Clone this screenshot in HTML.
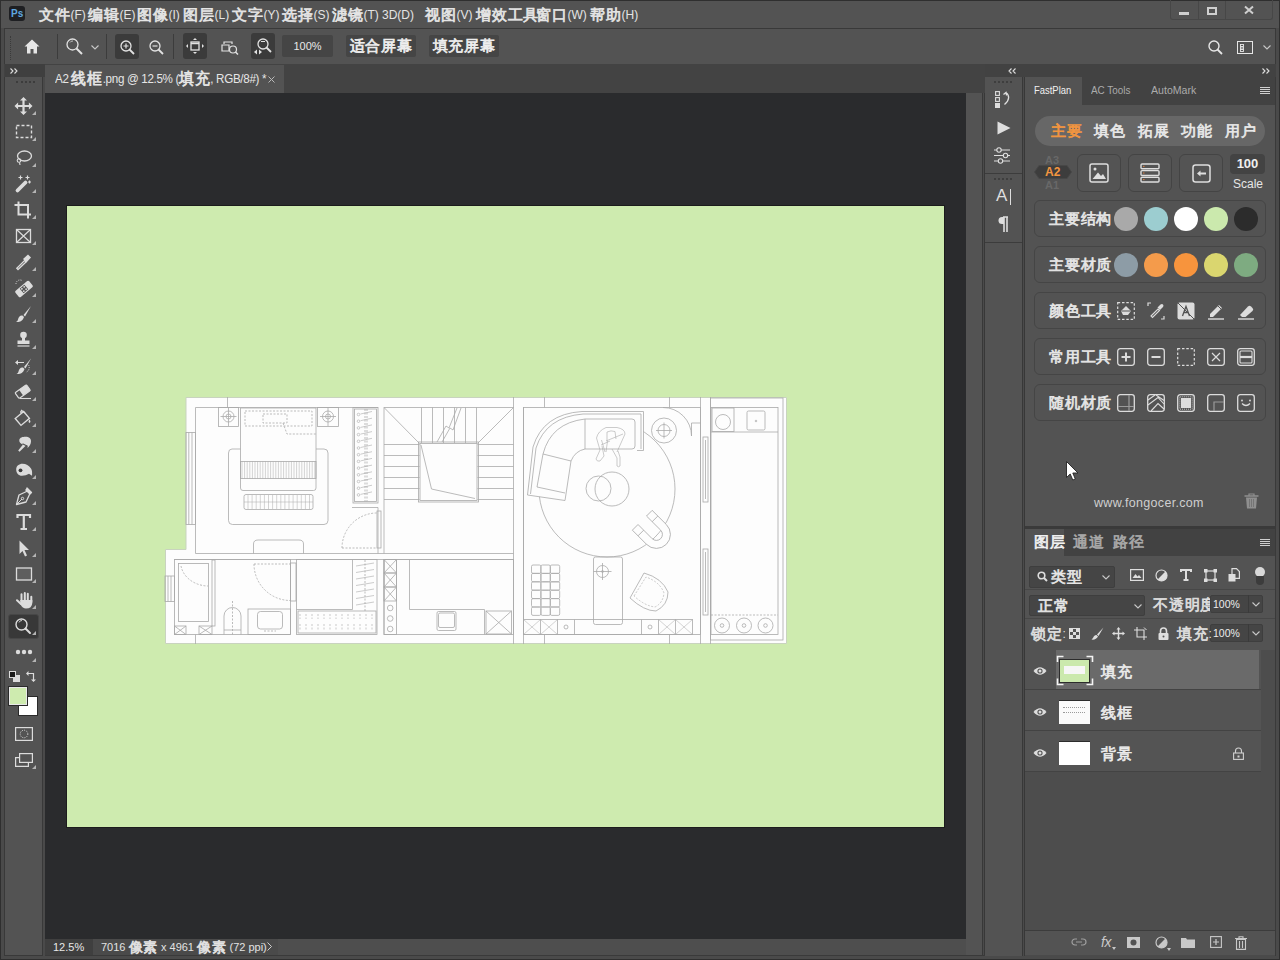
<!DOCTYPE html>
<html><head><meta charset="utf-8"><title>Photoshop</title>
<style>
*{margin:0;padding:0;box-sizing:border-box}
html,body{width:1280px;height:960px;overflow:hidden}
body{position:relative;background:#4a4a4a;font-family:"Liberation Sans",sans-serif;color:#e2e2e2;font-size:12px}
.a{position:absolute}
i{font-style:normal}
.c{font-size:1.25em;letter-spacing:.05em;-webkit-text-stroke:.7px currentColor;line-height:0;vertical-align:-1px}
svg{position:absolute;overflow:visible}
</style></head><body>

<!-- outer frame lines -->
<div class="a" style="left:0;top:0;width:1280px;height:1px;background:#2f2f2f"></div>
<div class="a" style="left:0;top:0;width:1px;height:960px;background:#2f2f2f"></div>
<div class="a" style="left:1279px;top:0;width:1px;height:960px;background:#2f2f2f"></div>
<div class="a" style="left:0;top:959px;width:1280px;height:1px;background:#2f2f2f"></div>

<!-- MENU BAR -->
<div class="a" id="menubar" style="left:1px;top:1px;width:1278px;height:27px;background:#535353"></div>


<!-- menu content -->
<div class="a" style="left:9px;top:6px;width:16px;height:15px;background:#1e1f22;border-radius:3px"></div>
<div class="a" style="left:11px;top:7px;font-size:10px;font-weight:bold;color:#5fa8e0;line-height:13px">Ps</div>
<div class="a" id="menu" style="top:8px;left:0;font-size:12px;line-height:14px;color:#e4e4e4;white-space:nowrap">
<span class="a" style="left:39px"><i class="c">文件</i>(F)</span>
<span class="a" style="left:88px"><i class="c">编辑</i>(E)</span>
<span class="a" style="left:137px"><i class="c">图像</i>(I)</span>
<span class="a" style="left:183px"><i class="c">图层</i>(L)</span>
<span class="a" style="left:232px"><i class="c">文字</i>(Y)</span>
<span class="a" style="left:282px"><i class="c">选择</i>(S)</span>
<span class="a" style="left:332px"><i class="c">滤镜</i>(T)</span>
<span class="a" style="left:382px">3D(D)</span>
<span class="a" style="left:425px"><i class="c">视图</i>(V)</span>
<span class="a" style="left:476px"><i class="c">增效工具</i></span>
<span class="a" style="left:536px"><i class="c">窗口</i>(W)</span>
<span class="a" style="left:590px"><i class="c">帮助</i>(H)</span>
</div>
<!-- window controls -->
<div class="a" style="left:1170px;top:0;width:103px;height:20px;border:1px solid #474747;border-top:none;border-radius:0 0 3px 3px"></div>
<div class="a" style="left:1198px;top:1px;width:1px;height:18px;background:#474747"></div>
<div class="a" style="left:1225px;top:1px;width:1px;height:18px;background:#474747"></div>
<div class="a" style="left:1179px;top:12px;width:10px;height:3px;background:#cfcfcf"></div>
<div class="a" style="left:1207px;top:7px;width:10px;height:8px;border:2px solid #cfcfcf"></div>
<svg class="a" style="left:1244px;top:6px" width="10" height="8" viewBox="0 0 10 8"><path d="M1 0.5L9 7.5M9 0.5L1 7.5" stroke="#cfcfcf" stroke-width="2"/></svg>

<!-- OPTIONS BAR -->
<div class="a" id="optbar" style="left:4px;top:28px;width:1272px;height:37px;background:#535353;border:1px solid #393939;border-right-color:#393939"></div>


<!-- options content -->
<div class="a" style="left:10px;top:36px;width:1px;height:24px;border-left:1px dotted #3a3a3a"></div>
<svg style="left:24px;top:39px" width="16" height="15" viewBox="0 0 16 15"><path d="M8 0.5L0.5 7.5H3V14.5H6.5V10H9.5V14.5H13V7.5H15.5Z" fill="#e6e6e6"/></svg>
<div class="a" style="left:57px;top:34px;width:1px;height:25px;background:#3c3c3c"></div>
<svg style="left:66px;top:38px" width="17" height="17" viewBox="0 0 17 17"><circle cx="6.5" cy="6.5" r="5.5" fill="none" stroke="#e2e2e2" stroke-width="1.3"/><path d="M10.5 10.5L16 16" stroke="#e2e2e2" stroke-width="2"/><path d="M4 4.5A3 3 0 0 1 7 3" stroke="#e2e2e2" stroke-width="0.8" fill="none"/></svg>
<svg style="left:91px;top:45px" width="8" height="5" viewBox="0 0 8 5"><path d="M0.5 0.5L4 4L7.5 0.5" stroke="#c8c8c8" stroke-width="1.1" fill="none"/></svg>
<div class="a" style="left:106px;top:34px;width:1px;height:25px;background:#3c3c3c"></div>
<div class="a" style="left:115px;top:34px;width:24px;height:25px;background:#3b3b3b;border-radius:3px"></div>
<svg style="left:120px;top:40px" width="15" height="15" viewBox="0 0 15 15"><circle cx="6" cy="6" r="5" fill="none" stroke="#e2e2e2" stroke-width="1.3"/><path d="M3.5 6H8.5M6 3.5V8.5" stroke="#e2e2e2" stroke-width="1.2"/><path d="M9.5 9.5L14 14" stroke="#e2e2e2" stroke-width="1.8"/></svg>
<svg style="left:149px;top:40px" width="15" height="15" viewBox="0 0 15 15"><circle cx="6" cy="6" r="5" fill="none" stroke="#e2e2e2" stroke-width="1.3"/><path d="M3.5 6H8.5" stroke="#e2e2e2" stroke-width="1.2"/><path d="M9.5 9.5L14 14" stroke="#e2e2e2" stroke-width="1.8"/></svg>
<div class="a" style="left:173px;top:34px;width:1px;height:25px;background:#3c3c3c"></div>
<div class="a" style="left:183px;top:33px;width:24px;height:26px;background:#3b3b3b;border-radius:3px"></div>
<svg style="left:186px;top:38px" width="18" height="16" viewBox="0 0 18 16"><rect x="5" y="4" width="8" height="8" fill="none" stroke="#e2e2e2" stroke-width="1.3"/><path d="M5 5.5H13" stroke="#e2e2e2" stroke-width="1.5"/><path d="M9 0L7 2H11Z M9 16L7 14H11Z M0 8L2 6V10Z M18 8L16 6V10Z" fill="#e2e2e2"/></svg>
<svg style="left:221px;top:40px" width="18" height="15" viewBox="0 0 18 15"><path d="M3 4V2H11V4M1 5H8V11H1Z" fill="none" stroke="#e2e2e2" stroke-width="1.2"/><circle cx="12" cy="9.5" r="3.5" fill="#535353" stroke="#e2e2e2" stroke-width="1.2"/><path d="M14.5 12L17 14.5" stroke="#e2e2e2" stroke-width="1.5"/></svg>
<div class="a" style="left:251px;top:33px;width:24px;height:26px;background:#3b3b3b;border-radius:3px"></div>
<svg style="left:253px;top:38px" width="20" height="17" viewBox="0 0 20 17"><circle cx="10" cy="6" r="5" fill="none" stroke="#e2e2e2" stroke-width="1.3"/><path d="M8 3.5H12" stroke="#e2e2e2" stroke-width="1"/><path d="M13.5 9.5L18 14" stroke="#e2e2e2" stroke-width="1.8"/><path d="M1 14L4 11.5V16.5Z M9 14L6 11.5V16.5Z" fill="#e2e2e2"/></svg>
<div class="a" style="left:282px;top:35px;width:51px;height:22px;background:#454545;border-radius:2px;font-size:11px;line-height:22px;text-align:center;color:#e8e8e8">100%</div>
<div class="a" style="left:346px;top:35px;width:70px;height:22px;background:#454545;border-radius:2px;font-size:12px;line-height:22px;text-align:center;color:#eeeeee"><i class="c">适合屏幕</i></div>
<div class="a" style="left:429px;top:35px;width:70px;height:22px;background:#454545;border-radius:2px;font-size:12px;line-height:22px;text-align:center;color:#eeeeee"><i class="c">填充屏幕</i></div>
<svg style="left:1208px;top:40px" width="15" height="15" viewBox="0 0 15 15"><circle cx="6" cy="6" r="5" fill="none" stroke="#e6e6e6" stroke-width="1.4"/><path d="M9.5 9.5L14 14" stroke="#e6e6e6" stroke-width="1.8"/></svg>
<div class="a" style="left:1237px;top:41px;width:16px;height:13px;border:1.5px solid #e6e6e6"></div>
<svg style="left:1240px;top:44px" width="4" height="8" viewBox="0 0 4 8"><rect x="0.5" y="0.5" width="3" height="2" fill="none" stroke="#e6e6e6" stroke-width="0.9"/><rect x="0.5" y="3" width="3" height="2" fill="none" stroke="#e6e6e6" stroke-width="0.9"/><rect x="0.5" y="5.5" width="3" height="2" fill="none" stroke="#e6e6e6" stroke-width="0.9"/></svg>
<svg style="left:1263px;top:45px" width="8" height="5" viewBox="0 0 8 5"><path d="M0.5 0.5L4 4L7.5 0.5" stroke="#c8c8c8" stroke-width="1.1" fill="none"/></svg>

<!-- LEFT TOOLBAR -->
<div class="a" style="left:4px;top:64px;width:41px;height:13px;background:#424242"></div>
<div class="a" id="toolbar" style="left:4px;top:77px;width:39px;height:879px;background:#535353;border:1px solid #393939;border-top:none"></div>

<!-- toolbar content -->
<div class="a" style="left:5px;top:64px;width:40px;height:13px;background:#3f3f3f"></div>
<svg style="left:10px;top:68px" width="8" height="6" viewBox="0 0 8 6"><path d="M0.5 0.5L3 3L0.5 5.5M4.5 0.5L7 3L4.5 5.5" stroke="#dcdcdc" stroke-width="1.1" fill="none"/></svg>
<div class="a" style="left:16px;top:81px;width:19px;height:2px;border-top:2px dotted #3c3c3c"></div>
<div class="a" style="left:8px;top:614px;width:31px;height:25px;background:#383838;border-radius:3px;border:1px solid #474747"></div>
<svg style="left:13px;top:96px" width="22" height="20" viewBox="0 0 22 20"><path d="M10.5 1L7 4.6H9.4V8.9H5.1V6.5L1.5 10L5.1 13.5V11.1H9.4V15.4H7L10.5 19L14 15.4H11.6V11.1H15.9V13.5L19.5 10L15.9 6.5V8.9H11.6V4.6H14Z" fill="#dcdcdc"/></svg>
<svg style="left:32px;top:111px" width="4" height="4" viewBox="0 0 4 4"><path d="M4 0V4H0Z" fill="#b4b4b4"/></svg>
<svg style="left:13px;top:122px" width="22" height="20" viewBox="0 0 22 20"><rect x="3.5" y="3.5" width="15" height="12" fill="none" stroke="#dcdcdc" stroke-width="1.4" stroke-dasharray="3 2"/></svg>
<svg style="left:32px;top:137px" width="4" height="4" viewBox="0 0 4 4"><path d="M4 0V4H0Z" fill="#b4b4b4"/></svg>
<svg style="left:13px;top:148px" width="22" height="20" viewBox="0 0 22 20"><ellipse cx="11.5" cy="8" rx="7" ry="5" fill="none" stroke="#dcdcdc" stroke-width="1.3"/><circle cx="6" cy="12.5" r="1.8" fill="none" stroke="#dcdcdc" stroke-width="1.1"/><path d="M6.5 14.3L7 17" stroke="#dcdcdc" stroke-width="1.1"/></svg>
<svg style="left:32px;top:163px" width="4" height="4" viewBox="0 0 4 4"><path d="M4 0V4H0Z" fill="#b4b4b4"/></svg>
<svg style="left:13px;top:174px" width="22" height="20" viewBox="0 0 22 20"><path d="M4.5 16.5L12.5 8.5" stroke="#dcdcdc" stroke-width="3.8" stroke-linecap="round"/><path d="M7.5 1.5V5.5M5.5 3.5H9.5M14.5 1.5V5.5M12.5 3.5H16.5M16.5 6.5V9.5M15 8H18" stroke="#dcdcdc" stroke-width="1.2"/></svg>
<svg style="left:32px;top:189px" width="4" height="4" viewBox="0 0 4 4"><path d="M4 0V4H0Z" fill="#b4b4b4"/></svg>
<svg style="left:13px;top:200px" width="22" height="20" viewBox="0 0 22 20"><path d="M5.5 1.5V14.5H18M1.5 5H15V18.5" fill="none" stroke="#dcdcdc" stroke-width="2"/></svg>
<svg style="left:32px;top:215px" width="4" height="4" viewBox="0 0 4 4"><path d="M4 0V4H0Z" fill="#b4b4b4"/></svg>
<svg style="left:13px;top:226px" width="22" height="20" viewBox="0 0 22 20"><rect x="3.5" y="3.5" width="14" height="13" fill="none" stroke="#dcdcdc" stroke-width="1.3"/><path d="M3.5 3.5L17.5 16.5M17.5 3.5L3.5 16.5" stroke="#dcdcdc" stroke-width="1.2"/></svg>
<svg style="left:32px;top:241px" width="4" height="4" viewBox="0 0 4 4"><path d="M4 0V4H0Z" fill="#b4b4b4"/></svg>
<svg style="left:13px;top:252px" width="22" height="20" viewBox="0 0 22 20"><path d="M5 17.5L3.8 16.3L11.5 8.6L13 10.1Z" fill="none" stroke="#dcdcdc" stroke-width="1.3"/><path d="M10 7L15 2.5L18 5.5L13.5 10.5Z" fill="#dcdcdc"/></svg>
<svg style="left:32px;top:267px" width="4" height="4" viewBox="0 0 4 4"><path d="M4 0V4H0Z" fill="#b4b4b4"/></svg>
<svg style="left:13px;top:278px" width="22" height="20" viewBox="0 0 22 20"><g transform="rotate(-40 11 11)"><rect x="2" y="7" width="18" height="8" rx="1.5" fill="#dcdcdc"/><rect x="8" y="8" width="6" height="6" fill="#535353"/><circle cx="9.5" cy="9.5" r=".9" fill="#dcdcdc"/><circle cx="12.5" cy="9.5" r=".9" fill="#dcdcdc"/><circle cx="9.5" cy="12.5" r=".9" fill="#dcdcdc"/><circle cx="12.5" cy="12.5" r=".9" fill="#dcdcdc"/></g><path d="M3 6A4 4 0 0 1 9 2.5" stroke="#dcdcdc" stroke-width="1" stroke-dasharray="1 1.2" fill="none"/></svg>
<svg style="left:32px;top:293px" width="4" height="4" viewBox="0 0 4 4"><path d="M4 0V4H0Z" fill="#b4b4b4"/></svg>
<svg style="left:13px;top:304px" width="22" height="20" viewBox="0 0 22 20"><path d="M18 2L10.5 11L12 12.5Z" fill="#dcdcdc"/><path d="M9.5 11.5C7 11 5.5 13 5 15.5C4.5 17 4 17.5 3 18C6 18.5 9.5 17.5 11 13Z" fill="#dcdcdc"/></svg>
<svg style="left:32px;top:319px" width="4" height="4" viewBox="0 0 4 4"><path d="M4 0V4H0Z" fill="#b4b4b4"/></svg>
<svg style="left:13px;top:330px" width="22" height="20" viewBox="0 0 22 20"><circle cx="10.5" cy="5" r="3.3" fill="#dcdcdc"/><path d="M9 7.5H12V10.5H16.5V14H4.5V10.5H9Z" fill="#dcdcdc"/><path d="M4.5 16H16.5" stroke="#dcdcdc" stroke-width="1.2"/></svg>
<svg style="left:32px;top:345px" width="4" height="4" viewBox="0 0 4 4"><path d="M4 0V4H0Z" fill="#b4b4b4"/></svg>
<svg style="left:13px;top:356px" width="22" height="20" viewBox="0 0 22 20"><path d="M18 2.5L11 11L12.5 12.5Z" fill="#dcdcdc"/><path d="M10 11.5C7.5 11 6 13 5.5 15.5C5 17 4.5 17.5 3.5 18C6.5 18.5 10 17.5 11.5 13Z" fill="#dcdcdc"/><path d="M2 6.5L5 4V9Z" fill="#dcdcdc"/><path d="M5 6.5H11" stroke="#dcdcdc" stroke-width="1"/><path d="M15.5 9A5 5 0 0 1 13.5 16" stroke="#dcdcdc" stroke-width="1" stroke-dasharray="1 1.2" fill="none"/></svg>
<svg style="left:32px;top:371px" width="4" height="4" viewBox="0 0 4 4"><path d="M4 0V4H0Z" fill="#b4b4b4"/></svg>
<svg style="left:13px;top:382px" width="22" height="20" viewBox="0 0 22 20"><g transform="rotate(-35 10 10)"><rect x="3" y="6" width="14" height="7" rx="1" fill="none" stroke="#dcdcdc" stroke-width="1.2"/><rect x="8" y="6" width="9" height="7" fill="#dcdcdc"/></g><path d="M7 16.5H18" stroke="#dcdcdc" stroke-width="1.1"/></svg>
<svg style="left:32px;top:397px" width="4" height="4" viewBox="0 0 4 4"><path d="M4 0V4H0Z" fill="#b4b4b4"/></svg>
<svg style="left:13px;top:408px" width="22" height="20" viewBox="0 0 22 20"><g transform="rotate(-40 9 10)"><rect x="3.5" y="6" width="11" height="9" fill="none" stroke="#dcdcdc" stroke-width="1.4"/></g><path d="M8 2L12 5" stroke="#dcdcdc" stroke-width="1.2"/><circle cx="8" cy="4" r="1" fill="#dcdcdc"/><path d="M16.5 11.5C15.5 13 15 14 16.5 15C18 14 17.5 13 16.5 11.5Z" fill="#dcdcdc"/></svg>
<svg style="left:32px;top:423px" width="4" height="4" viewBox="0 0 4 4"><path d="M4 0V4H0Z" fill="#b4b4b4"/></svg>
<svg style="left:13px;top:434px" width="22" height="20" viewBox="0 0 22 20"><path d="M6.5 17.8L5.2 16.6L10 10.5C7.5 10 6 8 6.3 6C6.8 3.5 9.5 2.8 12.5 2.8C16 2.8 18.3 4.5 18 7.8C17.7 10.5 16.5 12.5 14.5 14L14.8 11.8L13.2 11.2Z" fill="#dcdcdc"/><path d="M9.5 9.8L14 12" stroke="#535353" stroke-width="1.1"/></svg>
<svg style="left:32px;top:449px" width="4" height="4" viewBox="0 0 4 4"><path d="M4 0V4H0Z" fill="#b4b4b4"/></svg>
<svg style="left:13px;top:460px" width="22" height="20" viewBox="0 0 22 20"><path d="M3.2 9.5C3.2 6 6 3.8 9.5 3.8C13 3.8 16 5.5 18 8.5C19.2 10.5 19.3 13 19 15.8L16 13.8C14 15 11.5 15.8 9 15.8C5.5 15.8 3.2 13 3.2 9.5Z" fill="#dcdcdc"/><circle cx="7.5" cy="10.3" r="1.9" fill="#3a3a3a"/></svg>
<svg style="left:32px;top:475px" width="4" height="4" viewBox="0 0 4 4"><path d="M4 0V4H0Z" fill="#b4b4b4"/></svg>
<svg style="left:13px;top:486px" width="22" height="20" viewBox="0 0 22 20"><path d="M14 2L18.5 6.5L16.5 8.5L13 16L3.5 18.5L6 9L13.5 5.5Z" fill="none" stroke="#dcdcdc" stroke-width="1.3" stroke-linejoin="round"/><path d="M14 2L18.5 6.5L16.5 8.5L12 4Z" fill="#dcdcdc"/><path d="M3.5 18.5L9 13" stroke="#dcdcdc" stroke-width="1"/><circle cx="9.5" cy="12.5" r="1.2" fill="none" stroke="#dcdcdc" stroke-width="1"/></svg>
<svg style="left:32px;top:501px" width="4" height="4" viewBox="0 0 4 4"><path d="M4 0V4H0Z" fill="#b4b4b4"/></svg>
<svg style="left:13px;top:512px" width="22" height="20" viewBox="0 0 22 20"><path d="M4.5 6V3H17V6M10.8 3V17M7.5 17H14" fill="none" stroke="#dcdcdc" stroke-width="2.2"/></svg>
<svg style="left:32px;top:527px" width="4" height="4" viewBox="0 0 4 4"><path d="M4 0V4H0Z" fill="#b4b4b4"/></svg>
<svg style="left:13px;top:538px" width="22" height="20" viewBox="0 0 22 20"><path d="M6.5 2.5V16L9.5 13L12 18.5L14 17.5L11.5 12H16Z" fill="#dcdcdc"/></svg>
<svg style="left:32px;top:553px" width="4" height="4" viewBox="0 0 4 4"><path d="M4 0V4H0Z" fill="#b4b4b4"/></svg>
<svg style="left:13px;top:564px" width="22" height="20" viewBox="0 0 22 20"><rect x="3.5" y="4" width="15" height="12" fill="#5e5e5e" stroke="#dcdcdc" stroke-width="1.3"/></svg>
<svg style="left:32px;top:579px" width="4" height="4" viewBox="0 0 4 4"><path d="M4 0V4H0Z" fill="#b4b4b4"/></svg>
<svg style="left:13px;top:590px" width="22" height="20" viewBox="0 0 22 20"><path d="M8.5 4.2V11M11.8 3V11M14.8 3.8V11M18.3 6.8V12M4 10.2L8 14" stroke="#dcdcdc" stroke-width="2" stroke-linecap="round" fill="none"/><path d="M7.2 10H19.3V13Q19 18.5 13 18.5Q9.5 18.5 7.5 14.5Z" fill="#dcdcdc"/></svg>
<svg style="left:32px;top:605px" width="4" height="4" viewBox="0 0 4 4"><path d="M4 0V4H0Z" fill="#b4b4b4"/></svg>
<svg style="left:13px;top:616px" width="22" height="20" viewBox="0 0 22 20"><circle cx="8.5" cy="8.5" r="5.5" fill="none" stroke="#dcdcdc" stroke-width="1.4"/><path d="M12.5 12.5L17 17" stroke="#dcdcdc" stroke-width="2" stroke-linecap="round"/><path d="M6 6.5A3 3 0 0 1 9 4.5" stroke="#dcdcdc" stroke-width="0.9" fill="none"/></svg>
<svg style="left:32px;top:631px" width="4" height="4" viewBox="0 0 4 4"><path d="M4 0V4H0Z" fill="#b4b4b4"/></svg>
<svg style="left:15px;top:648px" width="18" height="8" viewBox="0 0 18 8"><circle cx="3" cy="4" r="2.2" fill="#dcdcdc"/><circle cx="9" cy="4" r="2.2" fill="#dcdcdc"/><circle cx="15" cy="4" r="2.2" fill="#dcdcdc"/></svg>
<svg style="left:32px;top:658px" width="4" height="4" viewBox="0 0 4 4"><path d="M4 0V4H0Z" fill="#b4b4b4"/></svg>
<div class="a" style="left:13px;top:675px;width:7px;height:7px;background:#dcdcdc"></div>
<div class="a" style="left:9px;top:671px;width:7px;height:7px;background:#1a1a1a;border:1px solid #dcdcdc"></div>
<svg style="left:26px;top:670px" width="11" height="12" viewBox="0 0 11 12"><path d="M1 3.5H7.5V10" fill="none" stroke="#dcdcdc" stroke-width="1.2"/><path d="M0 3.5L2.5 1V6Z M7.5 12L5 9.5H10Z" fill="#dcdcdc"/></svg>
<div class="a" style="left:18px;top:696px;width:20px;height:20px;background:#ffffff;border:1px solid #2a2a2a"></div>
<div class="a" style="left:8px;top:686px;width:20px;height:20px;background:#ceebaf;border:1px solid #2a2a2a;box-shadow:0 0 0 1px #e8e8e8 inset"></div>
<svg style="left:15px;top:727px" width="18" height="14" viewBox="0 0 18 14"><rect x="0.6" y="0.6" width="16.8" height="12.8" fill="none" stroke="#dcdcdc" stroke-width="1.2"/><circle cx="9" cy="7" r="3.8" fill="none" stroke="#dcdcdc" stroke-width="1" stroke-dasharray="1 1.2"/></svg>
<svg style="left:15px;top:753px" width="18" height="14" viewBox="0 0 18 14"><rect x="4.6" y="0.6" width="12.8" height="8.8" fill="none" stroke="#dcdcdc" stroke-width="1.2"/><path d="M4.6 4.6H0.6V13.4H13.4V9.4" fill="none" stroke="#dcdcdc" stroke-width="1.2"/></svg>
<svg style="left:32px;top:765px" width="4" height="4" viewBox="0 0 4 4"><path d="M4 0V4H0Z" fill="#b4b4b4"/></svg>

<!-- TAB BAR -->
<div class="a" style="left:45px;top:64px;width:940px;height:29px;background:#434343"></div>
<div class="a" style="left:45px;top:65px;width:239px;height:28px;background:#535353"></div>

<div class="a" style="left:55px;top:72px;font-size:12.5px;letter-spacing:-0.35px;line-height:14px;color:#e6e6e6;white-space:nowrap;transform:scaleX(.93);transform-origin:0 0">A2 <i class="c">线框</i>.png @ 12.5% (<i class="c">填充</i>, RGB/8#) *</div>
<svg style="left:268px;top:76px" width="7" height="7" viewBox="0 0 7 7"><path d="M0.5 0.5L6.5 6.5M6.5 0.5L0.5 6.5" stroke="#b8b8b8" stroke-width="1"/></svg>

<!-- CANVAS PASTEBOARD -->
<div class="a" id="paste" style="left:45px;top:93px;width:921px;height:846px;background:#2a2b2d"></div>
<!-- scroll strip -->
<div class="a" style="left:966px;top:93px;width:16px;height:862px;background:#535353"></div>
<div class="a" style="left:982px;top:93px;width:3px;height:863px;background:#4b4b4b;border-left:1px solid #383838;border-right:1px solid #383838"></div>

<!-- green canvas -->
<div class="a" style="left:66px;top:205px;width:879px;height:623px;background:#1c1c1c"></div>
<div class="a" id="green" style="left:67px;top:206px;width:877px;height:621px;background:#ceebaf"></div>

<!-- floor plan -->
<svg style="left:165px;top:397px" width="623" height="248" viewBox="165 397 623 248"><path d="M186 397.5H786.5V643.5H165.5V549.5H186Z" fill="#fdfdfd" stroke="#c9d3bf" stroke-width="1"/><g fill="none" stroke="#a9a9a9" stroke-width="0.8"><path d="M227.5 397L227.5 407.5"/><path d="M378 407.5H195.5V553.5H513.5"/><path d="M174.5 559.5L513.5 559.5"/><rect x="186" y="432.5" width="9.5" height="92.0"/><path d="M188.8 432.5L188.8 524.5"/><path d="M192 432.5L192 524.5"/><rect x="218.5" y="407.5" width="20.0" height="19.0"/><circle cx="228.5" cy="416.5" r="5.5"/><circle cx="228.5" cy="416.5" r="2.5"/><path d="M220.5 416.5L236.5 416.5"/><path d="M228.5 408L228.51 426"/><rect x="317.5" y="407.5" width="21.0" height="19.0"/><circle cx="328" cy="416.5" r="5.5"/><circle cx="328" cy="416.5" r="2.5"/><path d="M320 416.5L336 416.5"/><path d="M328 408L328.01 426"/><path d="M240.5 408H316V488Q316 490.5 313.5 490.5H243Q240.5 490.5 240.5 488Z"/><rect x="240.5" y="461.5" width="75.5" height="17.0"/><path d="M242.0 461.5V478.5M244.6 461.5V478.5M247.2 461.5V478.5M249.8 461.5V478.5M252.4 461.5V478.5M255.0 461.5V478.5M257.6 461.5V478.5M260.2 461.5V478.5M262.8 461.5V478.5M265.4 461.5V478.5M268.0 461.5V478.5M270.6 461.5V478.5M273.2 461.5V478.5M275.8 461.5V478.5M278.4 461.5V478.5M281.0 461.5V478.5M283.6 461.5V478.5M286.2 461.5V478.5M288.8 461.5V478.5M291.4 461.5V478.5M294.0 461.5V478.5M296.6 461.5V478.5M299.2 461.5V478.5M301.8 461.5V478.5M304.4 461.5V478.5M307.0 461.5V478.5M309.6 461.5V478.5M312.2 461.5V478.5M314.8 461.5V478.5" stroke-width="0.5"/><rect x="245" y="411" width="67" height="15" stroke-dasharray="2 1.5"/><rect x="263" y="414" width="24" height="9" stroke-dasharray="2 1.5"/><path d="M283 423L287 434H316" stroke-dasharray="2 1.5"/><path d="M240.5 449H232Q228.5 449 228.5 453V520.5Q228.5 524.5 232.5 524.5H324Q328 524.5 328 520.5V453Q328 449 324 449H316"/><rect x="244" y="494.5" width="69" height="15.0" rx="2"/><path d="M244 502L313 502" stroke-width="0.5"/><path d="M248.0 495V509M252.1 495V509M256.2 495V509M260.3 495V509M264.4 495V509M268.5 495V509M272.6 495V509M276.7 495V509M280.8 495V509M284.9 495V509M289.0 495V509M293.1 495V509M297.2 495V509M301.3 495V509M305.4 495V509M309.5 495V509" stroke-width="0.5"/><path d="M253.5 553.5V544Q253.5 540 258 540H299Q303.5 540 303.5 544V553.5"/><rect x="353" y="407.5" width="25" height="95.5"/><rect x="354.5" y="409" width="22.0" height="92.5"/><path d="M365 409L365 501.5" stroke-dasharray="2 1.5"/><path d="M367 409L367 501.5" stroke-dasharray="2 1.5"/><path d="M360.5 414.0L372 411.5M360.5 420.7L372 418.2M360.5 427.4L372 424.9M360.5 434.1L372 431.6M360.5 440.8L372 438.3M360.5 447.5L372 445.0M360.5 454.2L372 451.7M360.5 460.9L372 458.4M360.5 467.6L372 465.1M360.5 474.3L372 471.8M360.5 481.0L372 478.5M360.5 487.7L372 485.2M360.5 494.4L372 491.9" stroke-width="0.6"/><circle cx="358.5" cy="414.5" r="1.3" stroke-width="0.6"/><circle cx="358.5" cy="421.2" r="1.3" stroke-width="0.6"/><circle cx="358.5" cy="427.9" r="1.3" stroke-width="0.6"/><circle cx="358.5" cy="434.6" r="1.3" stroke-width="0.6"/><circle cx="358.5" cy="441.3" r="1.3" stroke-width="0.6"/><circle cx="358.5" cy="448.0" r="1.3" stroke-width="0.6"/><circle cx="358.5" cy="454.7" r="1.3" stroke-width="0.6"/><circle cx="358.5" cy="461.4" r="1.3" stroke-width="0.6"/><circle cx="358.5" cy="468.1" r="1.3" stroke-width="0.6"/><circle cx="358.5" cy="474.8" r="1.3" stroke-width="0.6"/><circle cx="358.5" cy="481.5" r="1.3" stroke-width="0.6"/><circle cx="358.5" cy="488.2" r="1.3" stroke-width="0.6"/><circle cx="358.5" cy="494.9" r="1.3" stroke-width="0.6"/><path d="M352 507.5H378V553.5"/><path d="M342 548A35 35 0 0 1 377 513" stroke-dasharray="2 1.5"/><path d="M342 548L377 548" stroke-dasharray="2 1.5"/><rect x="377" y="511" width="4" height="37"/><path d="M384 407.5L384 553.5"/><path d="M384 407.5L513.5 407.5"/><path d="M384 407.5L419.5 443.5"/><path d="M513.5 407.5L477.5 443.5"/><rect x="418.5" y="442" width="60.0" height="60"/><rect x="420" y="443.5" width="57" height="57.0"/><path d="M421.5 407.5L421.5 443"/><path d="M432.5 407.5L432.5 443"/><path d="M443.5 407.5L443.5 443"/><path d="M454.5 407.5L454.5 443"/><path d="M465.5 407.5L465.5 443"/><path d="M476.5 407.5L476.5 443"/><path d="M384 444.5L419.5 444.5"/><path d="M477.5 444.5L513.5 444.5"/><path d="M384 455.5L419.5 455.5"/><path d="M477.5 455.5L513.5 455.5"/><path d="M384 466.5L419.5 466.5"/><path d="M477.5 466.5L513.5 466.5"/><path d="M384 477.5L419.5 477.5"/><path d="M477.5 477.5L513.5 477.5"/><path d="M384 488.5L419.5 488.5"/><path d="M477.5 488.5L513.5 488.5"/><path d="M384 499.5L419.5 499.5"/><path d="M477.5 499.5L513.5 499.5"/><path d="M421 445L431.5 489L475 498.5"/><path d="M437 442L446 426L449 428L457 408M442 442L450 428L453 430L461 408"/><path d="M513.5 397L513.5 644"/><path d="M523.5 407.5L523.5 644"/><rect x="174.5" y="559.5" width="116.0" height="75.0"/><rect x="178.5" y="563.5" width="30.0" height="58.0"/><rect x="212" y="560" width="3" height="66" rx=" fill="#d2d2d2""/><rect x="174.5" y="626" width="11.5" height="8.5"/><path d="M174.5 626L186 634.5"/><path d="M186 626L174.5 634.5"/><rect x="199" y="626" width="13" height="8.5"/><path d="M199 626L212 634.5"/><path d="M212 626L199 634.5"/><path d="M181 566A28 24 0 0 0 208 586" stroke-dasharray="2 1.5"/><rect x="165" y="576" width="9.5" height="25.5"/><path d="M168 576L168 601.5"/><path d="M171 576L171 601.5"/><path d="M224 634.5V616A8.5 8.5 0 0 1 241 616V634.5"/><path d="M232.5 601L232.5 634.5" stroke-dasharray="2 1.5"/><path d="M224 630L241 630"/><rect x="248" y="609" width="42.5" height="25.5"/><rect x="257.5" y="611.5" width="25.0" height="17.5" rx="3"/><path d="M264 631L276 631" stroke-dasharray="2 1.5"/><path d="M254 564A36.5 36.5 0 0 0 290.5 600.5" stroke-dasharray="2 1.5"/><path d="M254 564L290.5 564" stroke-dasharray="2 1.5"/><rect x="290.5" y="563" width="5.5" height="38"/><rect x="296.5" y="559.5" width="80.5" height="75.0"/><path d="M296.5 609.5H352.5V559.5"/><rect x="298" y="611" width="78" height="22"/><path d="M300 614V619M300 624V630M306 614V619M306 624V630M312 614V619M312 624V630M318 614V619M318 624V630M324 614V619M324 624V630M330 614V619M330 624V630M336 614V619M336 624V630M342 614V619M342 624V630M348 614V619M348 624V630M354 614V619M354 624V630M360 614V619M360 624V630M366 614V619M366 624V630M372 614V619M372 624V630" stroke-width="0.6" stroke-dasharray="2 1.5"/><path d="M356 566.0L374 563.0M356 572.5L374 569.5M356 579.0L374 576.0M356 585.5L374 582.5M356 592.0L374 589.0M356 598.5L374 595.5M356 605.0L374 602.0" stroke-width="0.6"/><path d="M365 560L365 611" stroke-dasharray="2 1.5"/><path d="M195.5 634.5L195.5 644"/><rect x="384" y="559.5" width="129.5" height="75.0"/><rect x="384" y="559.5" width="12.5" height="75.0"/><rect x="384" y="559.5" width="12.5" height="13.5"/><path d="M384 559.5L396.5 573"/><path d="M396.5 559.5L384 573"/><rect x="384" y="573" width="12.5" height="14"/><path d="M384 573L396.5 587"/><path d="M396.5 573L384 587"/><rect x="384" y="587" width="12.5" height="14"/><path d="M384 587L396.5 601"/><path d="M396.5 587L384 601"/><circle cx="390.2" cy="608" r="2.8"/><circle cx="390.2" cy="618.5" r="2.8"/><circle cx="390.2" cy="629" r="2.8"/><path d="M409.5 559.5V609.5H484.5V634.5"/><rect x="437" y="611.5" width="19" height="19.0" rx="1.5"/><rect x="438.5" y="613" width="16.0" height="14.5" rx="1.5"/><rect x="486" y="611" width="25.5" height="23"/><path d="M486 611L511.5 634"/><path d="M511.5 611L486 634"/><rect x="523.5" y="407.5" width="177.0" height="227.0"/><path d="M544.5 397L544.5 407.5"/><path d="M544.5 634.5L544.5 644"/><path d="M669.5 397L669.5 407.5"/><path d="M669.5 634.5L669.5 644"/><circle cx="607" cy="489" r="68"/><path d="M527.5 495L533 447Q543 414 582 411.5H643.5V450.5H585Q575 451 571 461L565 500.5Z" fill="#fdfdfd" stroke="none"/><path d="M527.5 495L533 447Q543 414 582 411.5H643.5V450.5H637"/><path d="M530.5 494L536 448Q546 417 583 414H641V449"/><path d="M585 419H632Q635 419 635 422V446Q635 449 632 449H585Q575 451 571 461L565 500.5L527.5 495"/><path d="M585 419Q551 423 543 454L537 487L565 493"/><path d="M543 454L571 461"/><path d="M585 419V449"/><path d="M596.5 438Q598 431 606 427.5H617Q625 429 625 434L617 452M596.5 438L600 450L596 459Q597 462 600 461L604 456L602 446M601.5 440L605 452M607.5 441L606 452M607 441V432Q611 430 615 431.5L616 439M606 441L623 434M612 449L617 458V466Q618.5 467.5 620 466V457L618 451M601 445L610 441" stroke-width="0.6"/><circle cx="598.5" cy="488.5" r="12.5"/><circle cx="612" cy="489" r="17"/><circle cx="664" cy="430.5" r="12.5"/><circle cx="664" cy="430.5" r="6"/><path d="M656 430.5L672 430.5"/><path d="M664 422.5L664.01 438.5"/><path d="M663 407.5A28.5 28.5 0 0 1 691.5 436V423H700.5"/><g transform="translate(655 533) rotate(-45)"><path d="M-14 -18V2A14 14 0 0 0 14 2V-18H6V2A6 6 0 0 1 -6 2V-18Z" fill="#fdfdfd"/><path d="M-14 -10H-6M6 -10H14" /></g><rect x="531.5" y="565.0" width="9.4" height="8.4" rx="1.5"/><rect x="531.5" y="573.4" width="9.4" height="8.4" rx="1.5"/><rect x="531.5" y="581.8" width="9.4" height="8.4" rx="1.5"/><rect x="531.5" y="590.2" width="9.4" height="8.4" rx="1.5"/><rect x="531.5" y="598.6" width="9.4" height="8.4" rx="1.5"/><rect x="531.5" y="607.0" width="9.4" height="8.4" rx="1.5"/><rect x="540.9" y="565.0" width="9.4" height="8.4" rx="1.5"/><rect x="540.9" y="573.4" width="9.4" height="8.4" rx="1.5"/><rect x="540.9" y="581.8" width="9.4" height="8.4" rx="1.5"/><rect x="540.9" y="590.2" width="9.4" height="8.4" rx="1.5"/><rect x="540.9" y="598.6" width="9.4" height="8.4" rx="1.5"/><rect x="540.9" y="607.0" width="9.4" height="8.4" rx="1.5"/><rect x="550.3" y="565.0" width="9.4" height="8.4" rx="1.5"/><rect x="550.3" y="573.4" width="9.4" height="8.4" rx="1.5"/><rect x="550.3" y="581.8" width="9.4" height="8.4" rx="1.5"/><rect x="550.3" y="590.2" width="9.4" height="8.4" rx="1.5"/><rect x="550.3" y="598.6" width="9.4" height="8.4" rx="1.5"/><rect x="550.3" y="607.0" width="9.4" height="8.4" rx="1.5"/><rect x="593.5" y="557" width="29.0" height="67.5" rx="2"/><circle cx="602.5" cy="571.5" r="6"/><circle cx="602.5" cy="571.5" r="1"/><path d="M593.5 571.5L611.5 571.5"/><path d="M602.5 563L602.51 580"/><path d="M630 598L644 573Q662 578 668 592Q668 605 656 611Q644 611 630 598Z"/><path d="M634 596L646 577Q660 582 664 593Q663 603 655 607Q645 606 634 596Z" stroke-width="0.6" stroke-dasharray="2 1.5"/><rect x="523.5" y="619.5" width="169.0" height="15.0"/><path d="M540.5 619.5L540.5 634.5"/><path d="M557.5 619.5L557.5 634.5"/><path d="M574.5 619.5L574.5 634.5"/><path d="M641.5 619.5L641.5 634.5"/><path d="M658.5 619.5L658.5 634.5"/><path d="M675.5 619.5L675.5 634.5"/><path d="M523.5 619.5L540.5 634.5" stroke-width="0.5"/><path d="M540.5 619.5L523.5 634.5" stroke-width="0.5"/><path d="M540.5 619.5L557.5 634.5" stroke-width="0.5"/><path d="M557.5 619.5L540.5 634.5" stroke-width="0.5"/><path d="M658.5 619.5L675.5 634.5" stroke-width="0.5"/><path d="M675.5 619.5L658.5 634.5" stroke-width="0.5"/><path d="M675.5 619.5L692.5 634.5" stroke-width="0.5"/><path d="M692.5 619.5L675.5 634.5" stroke-width="0.5"/><circle cx="566" cy="627" r="2"/><circle cx="650" cy="627" r="2"/><path d="M700.5 397L700.5 644"/><path d="M710.5 397L710.5 644"/><rect x="703" y="437" width="5" height="65"/><path d="M705.5 440L705.5 499"/><rect x="703" y="549" width="5" height="66"/><path d="M705.5 552L705.5 612"/><rect x="710.5" y="398" width="72.5" height="242"/><rect x="711" y="407.5" width="67" height="227.0"/><rect x="712" y="408" width="22" height="23.5"/><circle cx="723" cy="422" r="7.5"/><rect x="747" y="411" width="18" height="19" rx="1.5"/><circle cx="756" cy="421" r="0.8"/><path d="M711 432L778 432"/><path d="M711 615L778 615" stroke-dasharray="2 1.5"/><circle cx="722" cy="625.5" r="7.5"/><circle cx="722" cy="625.5" r="1.8"/><circle cx="744" cy="625.5" r="7.5"/><circle cx="744" cy="625.5" r="1.8"/><circle cx="765.5" cy="625.5" r="7.5"/><circle cx="765.5" cy="625.5" r="1.8"/></g></svg>

<!-- STATUS BAR -->
<div class="a" style="left:45px;top:939px;width:921px;height:16px;background:#4e4e4e"></div>
<div class="a" style="left:45px;top:939px;width:48px;height:16px;background:#3f3f3f"></div>
<div class="a" style="left:93px;top:939px;width:185px;height:16px;background:#4a4a4a"></div>
<div class="a" style="left:45px;top:955px;width:980px;height:1px;background:#3a3a3a"></div>

<div class="a" style="left:53px;top:940px;font-size:11px;line-height:14px;color:#e8e8e8;white-space:nowrap">12.5%</div>
<div class="a" style="left:101px;top:940px;font-size:11px;line-height:14px;color:#e2e2e2;white-space:nowrap">7016 <i class="c">像素</i> x 4961 <i class="c">像素</i> (72 ppi)</div>
<svg style="left:267px;top:942px" width="5" height="9" viewBox="0 0 5 9"><path d="M0.5 0.5L4.5 4.5L0.5 8.5" stroke="#cfcfcf" stroke-width="1" fill="none"/></svg>

<!-- RIGHT: strip -->
<div class="a" style="left:985px;top:64px;width:291px;height:13px;background:#424242"></div>
<!-- icon column -->
<div class="a" id="iconcol" style="left:985px;top:77px;width:37px;height:879px;background:#535353"></div>
<div class="a" style="left:1022px;top:77px;width:3px;height:879px;background:#4b4b4b;border-left:1px solid #383838;border-right:1px solid #383838"></div>

<!-- FASTPLAN PANEL -->
<div class="a" style="left:1025px;top:77px;width:250px;height:28px;background:#424242"></div>
<div class="a" style="left:1025px;top:77px;width:57px;height:28px;background:#535353"></div>
<div class="a" id="fp" style="left:1025px;top:105px;width:250px;height:421px;background:#535353"></div>
<div class="a" style="left:1025px;top:526px;width:250px;height:3px;background:#3a3a3a"></div>

<!-- fastplan content -->
<svg style="left:1008px;top:68px" width="8" height="6" viewBox="0 0 8 6"><path d="M3.5 0.5L1 3L3.5 5.5M7.5 0.5L5 3L7.5 5.5" stroke="#dedede" stroke-width="1.1" fill="none"/></svg>
<svg style="left:1262px;top:68px" width="8" height="6" viewBox="0 0 8 6"><path d="M0.5 0.5L3 3L0.5 5.5M4.5 0.5L7 3L4.5 5.5" stroke="#dedede" stroke-width="1.1" fill="none"/></svg>
<div class="a" style="left:985px;top:173px;width:37px;height:1px;background:#3c3c3c"></div>
<div class="a" style="left:985px;top:242px;width:37px;height:1px;background:#3c3c3c"></div>
<div class="a" style="left:994px;top:81px;width:18px;height:2px;border-top:2px dotted #3e3e3e"></div>
<div class="a" style="left:994px;top:178px;width:18px;height:2px;border-top:2px dotted #3e3e3e"></div>
<svg style="left:995px;top:91px" width="17" height="18" viewBox="0 0 17 18"><rect x="0.6" y="0.6" width="3.8" height="3.8" fill="none" stroke="#dedede" stroke-width="1.1"/><rect x="0.6" y="6.6" width="3.8" height="3.8" fill="none" stroke="#dedede" stroke-width="1.1"/><rect x="0" y="12" width="5" height="5" fill="#dedede"/><path d="M8.5 3.5L11 1.5L11.5 4.5M11 1.8C14.5 4 15 9 9.5 13.5" fill="none" stroke="#dedede" stroke-width="1.3"/></svg>
<svg style="left:997px;top:121px" width="14" height="14" viewBox="0 0 14 14"><path d="M0.5 0.5L13.5 7L0.5 13.5Z" fill="#dedede"/></svg>
<svg style="left:994px;top:147px" width="17" height="17" viewBox="0 0 17 17"><path d="M0 3H16M0 8.5H16M0 14H16" stroke="#dedede" stroke-width="1.1"/><circle cx="5" cy="3" r="2.2" fill="#535353" stroke="#dedede" stroke-width="1.1"/><circle cx="11.5" cy="8.5" r="2.2" fill="#535353" stroke="#dedede" stroke-width="1.1"/><circle cx="6.5" cy="14" r="2.2" fill="#535353" stroke="#dedede" stroke-width="1.1"/></svg>
<div class="a" style="left:996px;top:187px;font-size:17px;line-height:18px;color:#dedede">A</div><div class="a" style="left:1010px;top:189px;width:1px;height:16px;background:#dedede"></div>
<svg style="left:997px;top:216px" width="12" height="16" viewBox="0 0 12 16"><path d="M6 1H11M7 1V16M10 1V16" stroke="#dedede" stroke-width="1.6" fill="none"/><path d="M7 1H5A3.5 3.5 0 0 0 5 8H7Z" fill="#dedede"/></svg>
<div class="a" style="left:1034px;top:83px;font-size:11.5px;line-height:14px;color:#f0f0f0;transform:scaleX(.82);transform-origin:0 0">FastPlan</div>
<div class="a" style="left:1091px;top:83px;font-size:11.5px;line-height:14px;color:#ababab;transform:scaleX(.86);transform-origin:0 0">AC Tools</div>
<div class="a" style="left:1151px;top:83px;font-size:11.5px;line-height:14px;color:#ababab;transform:scaleX(.92);transform-origin:0 0">AutoMark</div>
<svg style="left:1260px;top:87px" width="10" height="8" viewBox="0 0 10 8"><path d="M0 0.5H10M0 2.5H10M0 4.5H10M0 6.5H10" stroke="#cfcfcf" stroke-width="1"/></svg>
<div class="a" style="left:1035px;top:116px;width:230px;height:30px;background:#676767;border-radius:15px"></div>
<div class="a" style="left:1051px;top:124px;font-size:12px;line-height:14px;color:#f3963f"><i class="c">主要</i></div>
<div class="a" style="left:1094px;top:124px;font-size:12px;line-height:14px;color:#e8e8e8"><i class="c">填色</i></div>
<div class="a" style="left:1138px;top:124px;font-size:12px;line-height:14px;color:#e8e8e8"><i class="c">拓展</i></div>
<div class="a" style="left:1181px;top:124px;font-size:12px;line-height:14px;color:#e8e8e8"><i class="c">功能</i></div>
<div class="a" style="left:1225px;top:124px;font-size:12px;line-height:14px;color:#e8e8e8"><i class="c">用户</i></div>
<div class="a" style="left:1045px;top:154px;font-size:11px;font-weight:bold;line-height:12px;color:#686868">A3</div>
<div class="a" style="left:1045px;top:179px;font-size:11px;font-weight:bold;line-height:12px;color:#686868">A1</div>
<svg style="left:1034px;top:165px" width="38" height="14" viewBox="0 0 38 14"><path d="M5 0.5H33L37.5 7L33 13.5H5L0.5 7Z" fill="#3d3d3d" stroke="#474747" stroke-width="1"/></svg>
<div class="a" style="left:1045px;top:165px;font-size:12px;font-weight:bold;line-height:14px;color:#f3963f">A2</div>
<div class="a" style="left:1077px;top:154px;width:44px;height:38px;border:1px solid #444444;border-radius:6px;background:#545454"></div>
<div class="a" style="left:1128px;top:154px;width:44px;height:38px;border:1px solid #444444;border-radius:6px;background:#545454"></div>
<div class="a" style="left:1179px;top:154px;width:44px;height:38px;border:1px solid #444444;border-radius:6px;background:#545454"></div>
<svg style="left:1089px;top:163px" width="20" height="20" viewBox="0 0 20 20"><rect x="1" y="1" width="18" height="18" rx="2" fill="none" stroke="#dedede" stroke-width="1.5"/><circle cx="6" cy="6" r="1.5" fill="#dedede"/><path d="M3.5 16L9 9.5L12 13L14 11L17 16Z" fill="#dedede"/></svg>
<svg style="left:1140px;top:163px" width="20" height="20" viewBox="0 0 20 20"><rect x="1" y="1" width="18" height="4.8" rx="1" fill="none" stroke="#dedede" stroke-width="1.4"/><rect x="1" y="7.6" width="18" height="4.8" rx="1" fill="none" stroke="#dedede" stroke-width="1.4"/><rect x="1" y="14.2" width="18" height="4.8" rx="1" fill="none" stroke="#dedede" stroke-width="1.4"/><path d="M3 3.4H4.5M3 10H4.5M3 16.6H4.5" stroke="#e08040" stroke-width="1"/></svg>
<svg style="left:1192px;top:164px" width="19" height="19" viewBox="0 0 19 19"><rect x="1" y="1" width="17" height="17" rx="2.5" fill="none" stroke="#dedede" stroke-width="1.5"/><path d="M5 9.5L8.5 6.5V12.5Z" fill="#dedede"/><path d="M8 9.5H14" stroke="#dedede" stroke-width="2"/></svg>
<div class="a" style="left:1230px;top:154px;width:35px;height:20px;background:#434343;border-radius:4px;font-size:13px;font-weight:bold;line-height:20px;text-align:center;color:#efefef">100</div>
<div class="a" style="left:1233px;top:177px;font-size:12px;line-height:14px;color:#e6e6e6">Scale</div>
<div class="a" style="left:1034px;top:200px;width:232px;height:37px;border:1px solid #454545;border-radius:6px"></div>
<div class="a" style="left:1049px;top:212px;font-size:12px;line-height:14px;color:#e6e6e6"><i class="c">主要结构</i></div>
<div class="a" style="left:1034px;top:246px;width:232px;height:37px;border:1px solid #454545;border-radius:6px"></div>
<div class="a" style="left:1049px;top:258px;font-size:12px;line-height:14px;color:#e6e6e6"><i class="c">主要材质</i></div>
<div class="a" style="left:1034px;top:292px;width:232px;height:37px;border:1px solid #454545;border-radius:6px"></div>
<div class="a" style="left:1049px;top:304px;font-size:12px;line-height:14px;color:#e6e6e6"><i class="c">颜色工具</i></div>
<div class="a" style="left:1034px;top:338px;width:232px;height:37px;border:1px solid #454545;border-radius:6px"></div>
<div class="a" style="left:1049px;top:350px;font-size:12px;line-height:14px;color:#e6e6e6"><i class="c">常用工具</i></div>
<div class="a" style="left:1034px;top:384px;width:232px;height:37px;border:1px solid #454545;border-radius:6px"></div>
<div class="a" style="left:1049px;top:396px;font-size:12px;line-height:14px;color:#e6e6e6"><i class="c">随机材质</i></div>
<div class="a" style="left:1114px;top:207px;width:24px;height:24px;border-radius:50%;background:#a9a9a9"></div>
<div class="a" style="left:1144px;top:207px;width:24px;height:24px;border-radius:50%;background:#9ccdd0"></div>
<div class="a" style="left:1174px;top:207px;width:24px;height:24px;border-radius:50%;background:#ffffff"></div>
<div class="a" style="left:1204px;top:207px;width:24px;height:24px;border-radius:50%;background:#cbe9ad"></div>
<div class="a" style="left:1234px;top:207px;width:24px;height:24px;border-radius:50%;background:#2c2c2c"></div>
<div class="a" style="left:1114px;top:253px;width:24px;height:24px;border-radius:50%;background:#8d9ca6"></div>
<div class="a" style="left:1144px;top:253px;width:24px;height:24px;border-radius:50%;background:#f49b4b"></div>
<div class="a" style="left:1174px;top:253px;width:24px;height:24px;border-radius:50%;background:#f7943d"></div>
<div class="a" style="left:1204px;top:253px;width:24px;height:24px;border-radius:50%;background:#dad66f"></div>
<div class="a" style="left:1234px;top:253px;width:24px;height:24px;border-radius:50%;background:#7eab81"></div>
<svg style="left:1117px;top:302px" width="18" height="18" viewBox="0 0 18 18"><rect x="0.7" y="0.7" width="16.6" height="16.6" fill="none" stroke="#dcdcdc" stroke-width="1.2" stroke-dasharray="2.5 1.8"/><path d="M4 9L9 4L14 9L11 13H6Z" fill="#dcdcdc"/><path d="M4.5 9H13.5" stroke="#535353" stroke-width="1"/></svg>
<svg style="left:1147px;top:302px" width="18" height="18" viewBox="0 0 18 18"><path d="M1 4V1H4M14 17H17V14" fill="none" stroke="#dcdcdc" stroke-width="1.2"/><path d="M4 14L11 7L12.5 8.5L5.5 15.5Z" fill="none" stroke="#dcdcdc" stroke-width="1.1"/><path d="M10.5 5.5L13.5 2.5Q15 1.5 16 2.5Q17 3.5 16 5L13 8Z" fill="#dcdcdc"/></svg>
<svg style="left:1177px;top:302px" width="18" height="18" viewBox="0 0 18 18"><rect x="0.5" y="0.5" width="17" height="17" rx="2" fill="#dcdcdc"/><path d="M1 1L17 17" stroke="#535353" stroke-width="1"/><path d="M5.5 14L9 4.5L12.5 14M6.8 10.5H11.2" fill="none" stroke="#535353" stroke-width="1.3"/></svg>
<svg style="left:1207px;top:302px" width="18" height="18" viewBox="0 0 18 18"><path d="M3 12L12 3L15 6L6 15H3Z" fill="#dcdcdc"/><path d="M11 4L14 7" stroke="#535353" stroke-width="1"/><path d="M1 17H17" stroke="#dcdcdc" stroke-width="1.4"/></svg>
<svg style="left:1237px;top:302px" width="18" height="18" viewBox="0 0 18 18"><path d="M3 13L11 4.5Q12.5 3 14 4.5L15.5 6Q17 7.5 15.5 9L8.5 15H5Z" fill="#dcdcdc"/><path d="M1 17H17" stroke="#dcdcdc" stroke-width="1.4"/></svg>
<svg style="left:1117px;top:348px" width="18" height="18" viewBox="0 0 18 18"><rect x="0.7" y="0.7" width="16.6" height="16.6" rx="2.5" fill="none" stroke="#dcdcdc" stroke-width="1.3"/><path d="M9 4.5V13.5M4.5 9H13.5" stroke="#dcdcdc" stroke-width="2"/></svg>
<svg style="left:1147px;top:348px" width="18" height="18" viewBox="0 0 18 18"><rect x="0.7" y="0.7" width="16.6" height="16.6" rx="2.5" fill="none" stroke="#dcdcdc" stroke-width="1.3"/><path d="M4.5 9H13.5" stroke="#dcdcdc" stroke-width="2"/></svg>
<svg style="left:1177px;top:348px" width="18" height="18" viewBox="0 0 18 18"><rect x="0.7" y="0.7" width="16.6" height="16.6" fill="none" stroke="#dcdcdc" stroke-width="1.2" stroke-dasharray="2.5 1.8"/></svg>
<svg style="left:1207px;top:348px" width="18" height="18" viewBox="0 0 18 18"><rect x="0.7" y="0.7" width="16.6" height="16.6" rx="2.5" fill="none" stroke="#dcdcdc" stroke-width="1.3"/><path d="M5 5L13 13M13 5L5 13" stroke="#dcdcdc" stroke-width="1.2"/></svg>
<svg style="left:1237px;top:348px" width="18" height="18" viewBox="0 0 18 18"><rect x="0.7" y="0.7" width="16.6" height="16.6" rx="2.5" fill="none" stroke="#dcdcdc" stroke-width="1.3"/><rect x="3" y="3" width="12" height="12" rx="1" fill="none" stroke="#dcdcdc" stroke-width="1.1"/><path d="M3 9H15" stroke="#dcdcdc" stroke-width="2.2"/></svg>
<svg style="left:1117px;top:394px" width="18" height="18" viewBox="0 0 18 18"><rect x="0.7" y="0.7" width="16.6" height="16.6" rx="2.5" fill="none" stroke="#dcdcdc" stroke-width="1.3"/><path d="M12 1V17M1 12.5H17" stroke="#9a9a9a" stroke-width="1.2"/></svg>
<svg style="left:1147px;top:394px" width="18" height="18" viewBox="0 0 18 18"><rect x="0.7" y="0.7" width="16.6" height="16.6" rx="2.5" fill="none" stroke="#dcdcdc" stroke-width="1.3"/><path d="M1 6L8 1M1 11L11 3.5L17 10M4 17L11 9.5L17 15M9 1L17 6.5" fill="none" stroke="#dcdcdc" stroke-width="1.1"/></svg>
<svg style="left:1177px;top:394px" width="18" height="18" viewBox="0 0 18 18"><rect x="0.7" y="0.7" width="16.6" height="16.6" rx="2.5" fill="none" stroke="#dcdcdc" stroke-width="1.3"/><rect x="4" y="4" width="10" height="10" fill="#dcdcdc"/><rect x="2.8" y="2.8" width="12.4" height="12.4" fill="none" stroke="#dcdcdc" stroke-width="0.8" stroke-dasharray="1 1"/></svg>
<svg style="left:1207px;top:394px" width="18" height="18" viewBox="0 0 18 18"><rect x="0.7" y="0.7" width="16.6" height="16.6" rx="2.5" fill="none" stroke="#dcdcdc" stroke-width="1.3"/><path d="M7 17V8H17" fill="none" stroke="#9a9a9a" stroke-width="1.2"/></svg>
<svg style="left:1237px;top:394px" width="18" height="18" viewBox="0 0 18 18"><rect x="0.7" y="0.7" width="16.6" height="16.6" rx="2.5" fill="none" stroke="#dcdcdc" stroke-width="1.3"/><path d="M5 9.5Q9 13.5 13 9.5" fill="none" stroke="#dcdcdc" stroke-width="1.2"/><circle cx="5" cy="6.5" r=".9" fill="#dcdcdc"/><circle cx="13" cy="6.5" r=".9" fill="#dcdcdc"/></svg>
<svg style="left:1066px;top:461px" width="13" height="20" viewBox="0 0 13 20"><path d="M0.5 0.5V16.5L4.2 13L6.8 19L9.3 18L6.8 12H12Z" fill="#ffffff" stroke="#222" stroke-width="0.9"/></svg>
<div class="a" style="left:1094px;top:496px;font-size:12.5px;line-height:14px;color:#cfcfcf;letter-spacing:0.3px">www.fongocer.com</div>
<svg style="left:1244px;top:493px" width="15" height="16" viewBox="0 0 15 16"><path d="M0.5 3H14.5" stroke="#8f8f8f" stroke-width="1.5"/><path d="M5 3V1H10V3" fill="none" stroke="#8f8f8f" stroke-width="1.2"/><path d="M2 4.5H13L12 15.5H3Z" fill="#8f8f8f"/><path d="M5.5 6V14M7.5 6V14M9.5 6V14" stroke="#6f6f6f" stroke-width="0.8"/></svg>

<!-- LAYERS PANEL -->
<div class="a" style="left:1025px;top:529px;width:250px;height:27px;background:#424242"></div>
<div class="a" style="left:1025px;top:529px;width:39px;height:27px;background:#535353"></div>
<div class="a" id="layers" style="left:1025px;top:556px;width:250px;height:399px;background:#535353"></div>
<div class="a" style="left:1275px;top:77px;width:1px;height:879px;background:#3a3a3a"></div>

<!-- layers content -->
<div class="a" style="left:1034px;top:535px;font-size:12px;line-height:14px;color:#f0f0f0"><i class="c">图层</i></div>
<div class="a" style="left:1073px;top:535px;font-size:12px;line-height:14px;color:#a8a8a8"><i class="c">通道</i></div>
<div class="a" style="left:1113px;top:535px;font-size:12px;line-height:14px;color:#a8a8a8"><i class="c">路径</i></div>
<svg style="left:1260px;top:539px" width="10" height="8" viewBox="0 0 10 8"><path d="M0 0.5H10M0 2.5H10M0 4.5H10M0 6.5H10" stroke="#cfcfcf" stroke-width="1"/></svg>
<div class="a" style="left:1029px;top:566px;width:86px;height:22px;background:#454545;border:1px solid #3e3e3e;border-radius:2px"></div>
<svg style="left:1037px;top:571px" width="11" height="11" viewBox="0 0 11 11"><circle cx="4.5" cy="4.5" r="3.3" fill="none" stroke="#dedede" stroke-width="1.6"/><path d="M7 7L10 10" stroke="#dedede" stroke-width="2"/></svg>
<div class="a" style="left:1051px;top:570px;font-size:12px;line-height:14px;color:#e6e6e6"><i class="c">类型</i></div>
<svg style="left:1102px;top:575px" width="8" height="5" viewBox="0 0 8 5"><path d="M0.5 0.5L4 4L7.5 0.5" stroke="#c8c8c8" stroke-width="1.1" fill="none"/></svg>
<svg style="left:1130px;top:569px" width="14" height="12" viewBox="0 0 14 12"><rect x="0.6" y="0.6" width="12.8" height="10.8" fill="none" stroke="#dedede" stroke-width="1.2"/><path d="M2.5 9L5.5 5L7.5 7.5L9 6L11.5 9Z" fill="#dedede"/></svg>
<svg style="left:1155px;top:569px" width="13" height="13" viewBox="0 0 13 13"><circle cx="6.5" cy="6.5" r="5.5" fill="none" stroke="#dedede" stroke-width="1.2"/><path d="M10.4 2.6A5.5 5.5 0 0 1 2.6 10.4Z" fill="#dedede"/></svg>
<svg style="left:1180px;top:569px" width="12" height="12" viewBox="0 0 12 12"><path d="M1 3V1H11V3M6 1V11M3.5 11H8.5" fill="none" stroke="#dedede" stroke-width="2"/></svg>
<svg style="left:1204px;top:569px" width="13" height="13" viewBox="0 0 13 13"><rect x="2" y="2" width="9" height="9" fill="none" stroke="#dedede" stroke-width="1.2"/><rect x="0" y="0" width="3.5" height="3.5" fill="#dedede"/><rect x="9.5" y="0" width="3.5" height="3.5" fill="#dedede"/><rect x="0" y="9.5" width="3.5" height="3.5" fill="#dedede"/><rect x="9.5" y="9.5" width="3.5" height="3.5" fill="#dedede"/></svg>
<svg style="left:1228px;top:568px" width="12" height="14" viewBox="0 0 12 14"><path d="M4 0.6H8.5L11.4 3.5V10.4H4Z" fill="none" stroke="#dedede" stroke-width="1.2"/><rect x="0.5" y="6" width="7" height="7.5" fill="#dedede"/></svg>
<div class="a" style="left:1255px;top:567px;width:10px;height:10px;border-radius:50%;background:#d8d8d8"></div><div class="a" style="left:1256px;top:576px;width:8px;height:9px;border-radius:0 0 4px 4px;background:#3c3c3c"></div>
<div class="a" style="left:1025px;top:589px;width:250px;height:1px;background:#474747"></div>
<div class="a" style="left:1029px;top:595px;width:116px;height:21px;background:#454545;border:1px solid #3e3e3e;border-radius:2px"></div>
<div class="a" style="left:1038px;top:599px;font-size:12px;line-height:14px;color:#e6e6e6"><i class="c">正常</i></div>
<svg style="left:1134px;top:604px" width="8" height="5" viewBox="0 0 8 5"><path d="M0.5 0.5L4 4L7.5 0.5" stroke="#c8c8c8" stroke-width="1.1" fill="none"/></svg>
<div class="a" style="left:1153px;top:598px;font-size:12px;line-height:14px;color:#dedede;white-space:nowrap"><i class="c">不透明度</i>:</div>
<div class="a" style="left:1210px;top:595px;width:53px;height:18px;background:#454545;border:1px solid #3e3e3e;border-radius:2px"></div>
<div class="a" style="left:1248px;top:595px;width:1px;height:18px;background:#3a3a3a"></div>
<div class="a" style="left:1213px;top:597px;font-size:10.5px;line-height:14px;color:#ececec">100%</div>
<svg style="left:1252px;top:602px" width="8" height="5" viewBox="0 0 8 5"><path d="M0.5 0.5L4 4L7.5 0.5" stroke="#c8c8c8" stroke-width="1.1" fill="none"/></svg>
<div class="a" style="left:1210px;top:624px;width:53px;height:18px;background:#454545;border:1px solid #3e3e3e;border-radius:2px"></div>
<div class="a" style="left:1248px;top:624px;width:1px;height:18px;background:#3a3a3a"></div>
<div class="a" style="left:1213px;top:626px;font-size:10.5px;line-height:14px;color:#ececec">100%</div>
<svg style="left:1252px;top:631px" width="8" height="5" viewBox="0 0 8 5"><path d="M0.5 0.5L4 4L7.5 0.5" stroke="#c8c8c8" stroke-width="1.1" fill="none"/></svg>
<div class="a" style="left:1025px;top:618px;width:250px;height:1px;background:#474747"></div>
<div class="a" style="left:1031px;top:627px;font-size:12px;line-height:14px;color:#dedede;white-space:nowrap"><i class="c">锁定</i>:</div>
<svg style="left:1069px;top:628px" width="11" height="11" viewBox="0 0 11 11"><rect x="0.5" y="0.5" width="10" height="10" fill="none" stroke="#dedede" stroke-width="1"/><path d="M1 1H4V4H1ZM7 1H10V4H7ZM4 4H7V7H4ZM1 7H4V10H1ZM7 7H10V10H7Z" fill="#dedede"/></svg>
<svg style="left:1091px;top:627px" width="13" height="13" viewBox="0 0 13 13"><path d="M12.5 0.5L6 7.5L7.5 9Z" fill="#dedede"/><path d="M5.5 8C3.5 8 2.5 9.5 2 11L0.5 12.5C3 13 6 12 7 9.5Z" fill="#dedede"/></svg>
<svg style="left:1112px;top:627px" width="13" height="13" viewBox="0 0 13 13"><path d="M6.5 0L4.5 2.5H5.8V5.8H2.5V4.5L0 6.5L2.5 8.5V7.2H5.8V10.5H4.5L6.5 13L8.5 10.5H7.2V7.2H10.5V8.5L13 6.5L10.5 4.5V5.8H7.2V2.5H8.5Z" fill="#dedede"/></svg>
<svg style="left:1134px;top:627px" width="14" height="13" viewBox="0 0 14 13"><path d="M3 0V10H13M0 3H10V13" fill="none" stroke="#dedede" stroke-width="1.1"/><path d="M10 0.5L12.5 3" stroke="#dedede" stroke-width="1"/></svg>
<svg style="left:1158px;top:627px" width="11" height="13" viewBox="0 0 11 13"><path d="M2.5 6V4A3 3 0 0 1 8.5 4V6" fill="none" stroke="#dedede" stroke-width="1.6"/><rect x="0.5" y="6" width="10" height="7" rx="1" fill="#dedede"/><circle cx="5.5" cy="9.5" r="1" fill="#535353"/></svg>
<div class="a" style="left:1177px;top:627px;font-size:12px;line-height:14px;color:#dedede;white-space:nowrap"><i class="c">填充</i>:</div>
<div class="a" style="left:1261px;top:650px;width:14px;height:122px;background:#4d4d4d"></div>
<div class="a" style="left:1025px;top:690px;width:236px;height:82px;background:#545454"></div>
<div class="a" style="left:1056px;top:650px;width:203px;height:39px;background:#6a6a6a"></div>
<div class="a" style="left:1025px;top:689px;width:236px;height:1px;background:#434343"></div>
<div class="a" style="left:1025px;top:730px;width:236px;height:1px;background:#434343"></div>
<div class="a" style="left:1025px;top:771px;width:236px;height:1px;background:#434343"></div>
<div class="a" style="left:1025px;top:772px;width:250px;height:158px;background:#4d4d4d"></div>
<svg style="left:1033px;top:666px" width="14" height="10" viewBox="0 0 14 10"><path d="M0.5 5Q7 -2.5 13.5 5Q7 12.5 0.5 5Z" fill="#dedede"/><circle cx="7" cy="5" r="2.6" fill="#535353"/><circle cx="7" cy="5" r="1.5" fill="#dedede"/></svg>
<svg style="left:1033px;top:707px" width="14" height="10" viewBox="0 0 14 10"><path d="M0.5 5Q7 -2.5 13.5 5Q7 12.5 0.5 5Z" fill="#dedede"/><circle cx="7" cy="5" r="2.6" fill="#535353"/><circle cx="7" cy="5" r="1.5" fill="#dedede"/></svg>
<svg style="left:1033px;top:748px" width="14" height="10" viewBox="0 0 14 10"><path d="M0.5 5Q7 -2.5 13.5 5Q7 12.5 0.5 5Z" fill="#dedede"/><circle cx="7" cy="5" r="2.6" fill="#535353"/><circle cx="7" cy="5" r="1.5" fill="#dedede"/></svg>
<div class="a" style="left:1059px;top:659px;width:31px;height:24px;background:#cbe9ad;border:1px solid #2c2c2c"></div>
<div class="a" style="left:1064px;top:666px;width:21px;height:8px;background:#f6f6f6"></div>
<svg style="left:1056px;top:655px" width="38" height="31" viewBox="0 0 38 31"><path d="M1.5 7V1.5H7.5M30.5 1.5H36.5V7M36.5 23.5V29.5H30.5M7.5 29.5H1.5V23.5" fill="none" stroke="#f4f4f4" stroke-width="1.6"/></svg>
<div class="a" style="left:1059px;top:700px;width:31px;height:24px;background:#fafafa;border:1px solid #2c2c2c;border-width:1px 0 0 0"></div>
<div class="a" style="left:1063px;top:707px;width:22px;height:6px;border-top:1px dotted #9a9a9a;border-bottom:1px dotted #9a9a9a"></div>
<div class="a" style="left:1059px;top:741px;width:31px;height:24px;background:#ffffff;border-top:1px solid #2c2c2c"></div>
<div class="a" style="left:1101px;top:665px;font-size:12px;line-height:14px;color:#eaeaea"><i class="c">填充</i></div>
<div class="a" style="left:1101px;top:706px;font-size:12px;line-height:14px;color:#eaeaea"><i class="c">线框</i></div>
<div class="a" style="left:1101px;top:747px;font-size:12px;line-height:14px;color:#eaeaea"><i class="c">背景</i></div>
<svg style="left:1233px;top:747px" width="11" height="13" viewBox="0 0 11 13"><path d="M2.5 6V4A3 3 0 0 1 8.5 4V6" fill="none" stroke="#cfcfcf" stroke-width="1.1"/><rect x="0.6" y="6" width="9.8" height="6.4" fill="none" stroke="#cfcfcf" stroke-width="1.1"/><rect x="4.5" y="8.5" width="2" height="2" fill="#cfcfcf"/></svg>
<div class="a" style="left:1025px;top:930px;width:250px;height:1px;background:#3c3c3c"></div>
<svg style="left:1071px;top:938px" width="16" height="8" viewBox="0 0 16 8"><path d="M6 1H4A3 3 0 0 0 4 7H6M10 1H12A3 3 0 0 1 12 7H10M5 4H11" fill="none" stroke="#9e9e9e" stroke-width="1.2"/></svg>
<div class="a" style="left:1101px;top:934px;font-size:14px;font-style:italic;line-height:16px;letter-spacing:-0.5px;color:#c8c8c8">fx</div>
<svg style="left:1112px;top:947px" width="4" height="3" viewBox="0 0 4 3"><path d="M0 0H4L2 3Z" fill="#c8c8c8"/></svg>
<svg style="left:1127px;top:937px" width="13" height="11" viewBox="0 0 13 11"><rect x="0" y="0" width="13" height="11" fill="#c8c8c8"/><circle cx="6.5" cy="5.5" r="3" fill="#535353"/></svg>
<svg style="left:1155px;top:936px" width="13" height="13" viewBox="0 0 13 13"><circle cx="6.5" cy="6.5" r="5.5" fill="none" stroke="#c8c8c8" stroke-width="1.2"/><path d="M10.4 2.6A5.5 5.5 0 0 1 2.6 10.4Z" fill="#c8c8c8"/></svg>
<svg style="left:1167px;top:948px" width="4" height="3" viewBox="0 0 4 3"><path d="M0 0H4L2 3Z" fill="#c8c8c8"/></svg>
<svg style="left:1181px;top:937px" width="14" height="11" viewBox="0 0 14 11"><path d="M0 1H5L6 2.5H14V11H0Z" fill="#c8c8c8"/></svg>
<svg style="left:1210px;top:936px" width="12" height="12" viewBox="0 0 12 12"><rect x="0.6" y="0.6" width="10.8" height="10.8" fill="none" stroke="#c8c8c8" stroke-width="1.1"/><path d="M6 3V9M3 6H9" stroke="#c8c8c8" stroke-width="1.2"/></svg>
<svg style="left:1235px;top:936px" width="12" height="14" viewBox="0 0 12 14"><path d="M0 2.5H12M4 2.5V0.8H8V2.5" fill="none" stroke="#c8c8c8" stroke-width="1.1"/><path d="M1.5 3.5H10.5V13.4H1.5Z" fill="none" stroke="#c8c8c8" stroke-width="1.1"/><path d="M4.5 5V12M7.5 5V12" stroke="#c8c8c8" stroke-width="1.1"/></svg>
</body></html>
